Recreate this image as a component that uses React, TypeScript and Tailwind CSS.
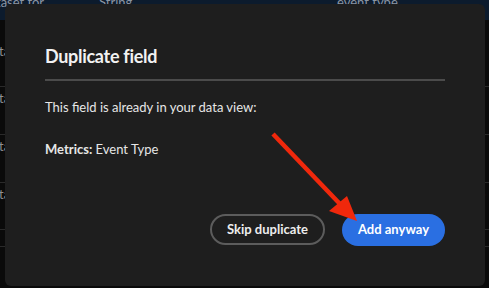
import React from 'react';

const rows = [
  { h: 'h-[47px]', label: 'ta', right: '' },
  { h: 'h-[48px]', label: 'ta', right: '' },
  { h: 'h-[48px]', label: 'ta', right: '' },
  { h: 'h-[47px]', label: 'ta', right: 'ie' },
  { h: 'h-[17px]', label: '', right: '' },
];

export default function App() {
  return (
    <div
      className="relative w-[489px] h-[288px] overflow-hidden bg-[#0a0a0a]"
      style={{ fontFamily: 'Lato, "Open Sans", sans-serif' }}
    >
      {/* table behind the dialog */}
      <div className="flex flex-col">
        <div className="h-[27px] bg-[#0c1b2d] flex items-start text-[13px] text-[#8b95a3] -mt-[7px]">
          <span className="w-[103px] -ml-[4px]">taset for</span>
          <span className="w-[238px]">String</span>
          <span>event type</span>
        </div>
        <div className="h-[20px]" />
        {rows.map((r, i) => (
          <div key={i} className={`${r.h} border-b border-[#2a2a2a] flex items-start justify-between text-[13px] text-[#8f8f8f]`}>
            <span className="-ml-[1px] mt-[2px]">{r.label}</span>
            <span className="mr-[4px] mt-[2px]">{r.right}</span>
          </div>
        ))}
      </div>

      {/* dialog */}
      <div className="absolute left-[5px] top-[4px] w-[480px] h-[282px] rounded-[6px] bg-[#1e1e1e] px-[40px] pt-[40px] flex flex-col">
        <h2 className="text-[18px] font-bold text-[#f2f2f2] leading-[24px] tracking-[-0.3px]">Duplicate field</h2>
        <div className="mt-[11px] h-[2px] bg-[#4b4b4b]" />
        <p className="mt-[16px] text-[13px] text-[#e6e6e6] leading-[20px]">This field is already in your data view:</p>
        <p className="mt-[22px] text-[13px] text-[#e6e6e6] leading-[20px]">
          <span className="font-bold">Metrics:</span> Event Type
        </p>
        <div className="mt-auto mb-[40px] flex justify-end gap-[17px]">
          <button className="h-[31px] px-[15px] rounded-full border-2 border-[#5c5c5c] text-[13px] font-bold text-[#ededed]">
            Skip duplicate
          </button>
          <button className="h-[32px] px-[16px] rounded-full bg-[#2a6fe2] text-[13px] font-bold text-white">
            Add anyway
          </button>
        </div>
      </div>

      {/* annotation arrow */}
      <svg className="absolute left-0 top-0" width="489" height="288" viewBox="0 0 489 288">
        <line x1="273" y1="134" x2="340" y2="204" stroke="#f0280c" strokeWidth="4.5" />
        <polygon points="357,221 329,211 347,196" fill="#f0280c" />
      </svg>
    </div>
  );
}
